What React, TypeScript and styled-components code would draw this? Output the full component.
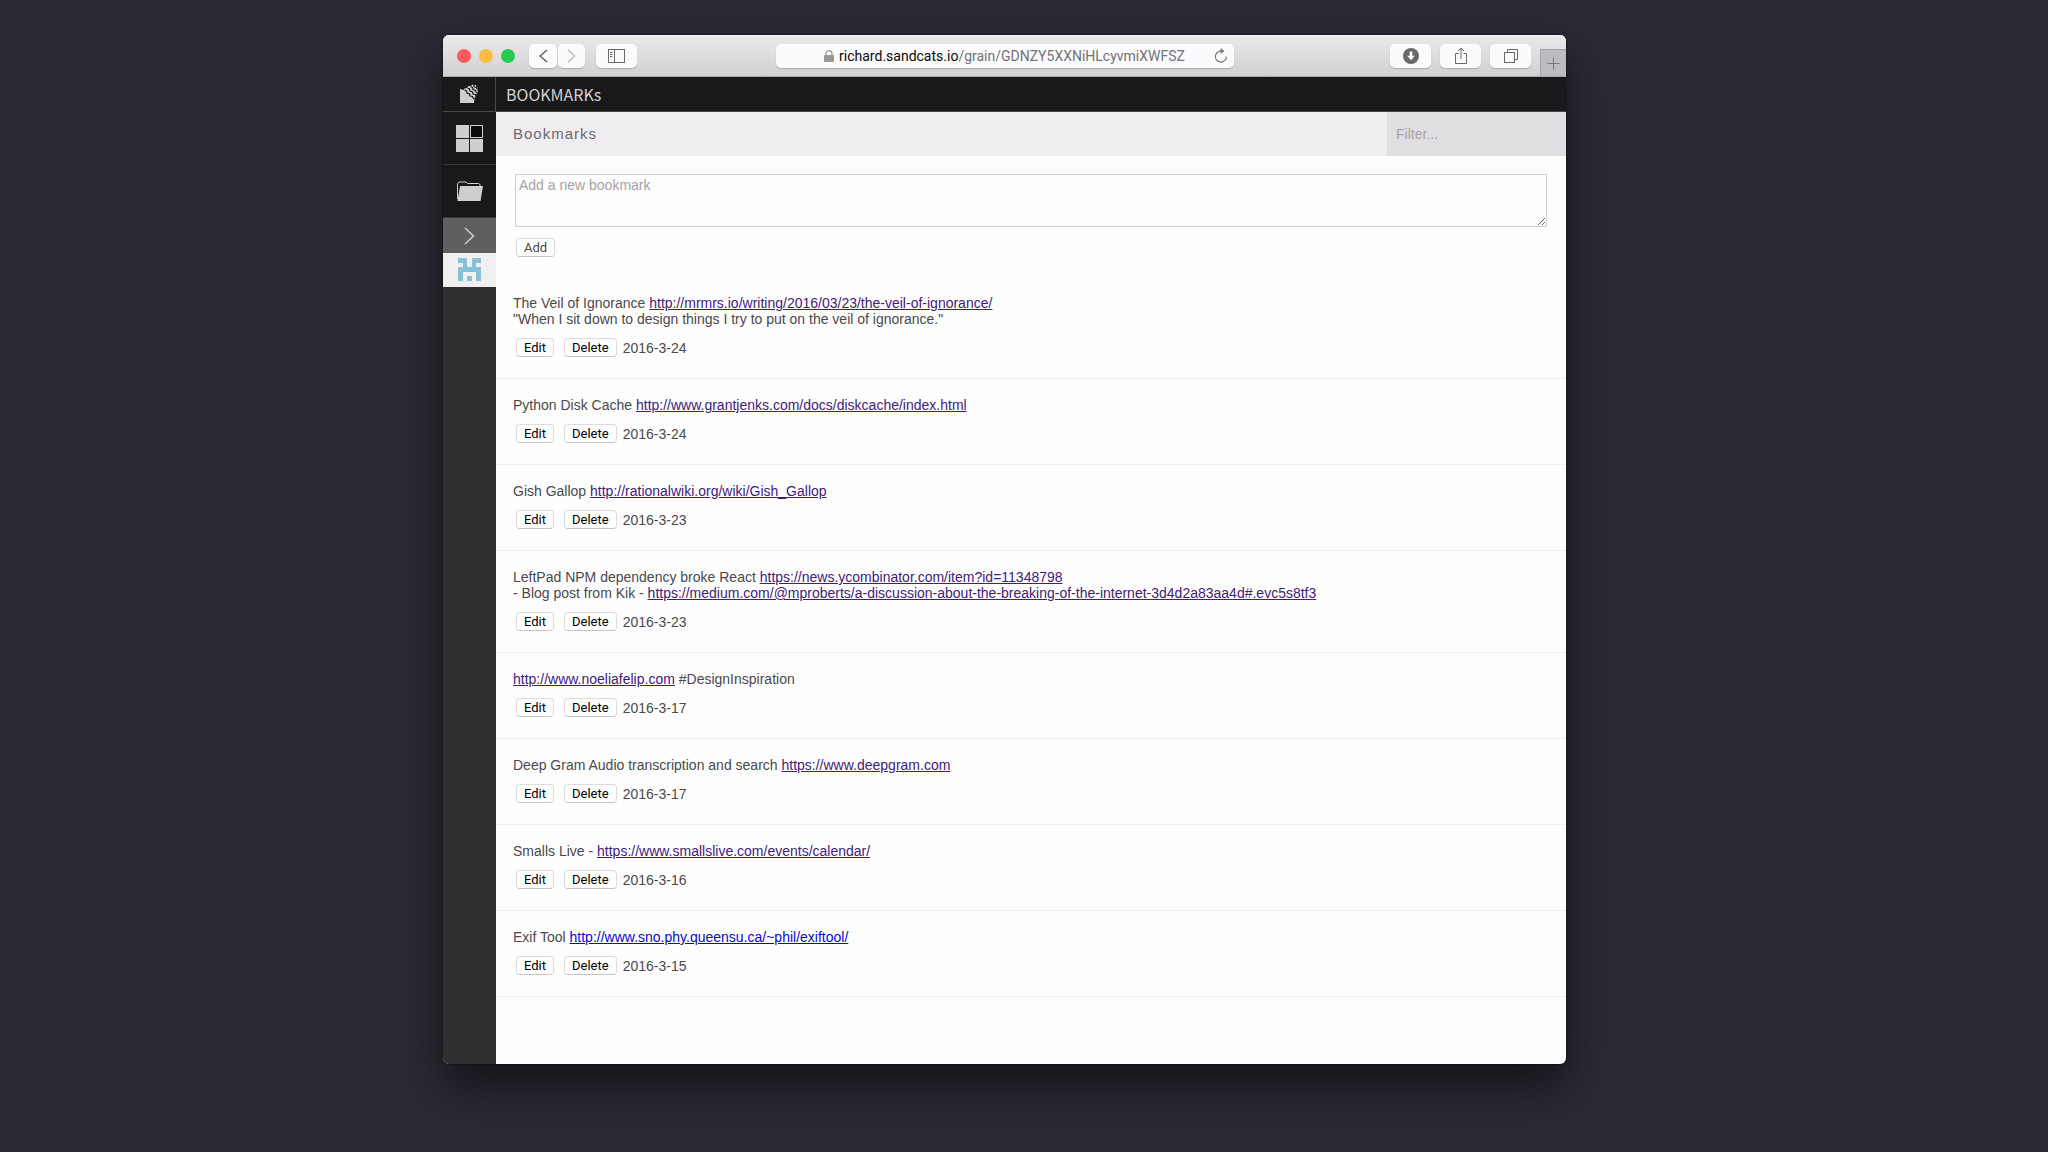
import React from "react";
import styled, { createGlobalStyle, css } from "styled-components";

const sans = `"Liberation Sans", Arial, Helvetica, sans-serif`;
const system = `Roboto, "Liberation Sans", sans-serif`;

const GlobalStyle = createGlobalStyle`
  *, *::before, *::after { box-sizing: border-box; }
  body { margin: 0; background: #2a2a35; font-family: ${sans}; }
`;

const Desktop = styled.div`
  display: flex;
  min-height: 100vh;
  padding: 35px 482px 88px 443px;
  background: #2a2a35;
`;

const BrowserWindow = styled.div`
  flex: 1;
  min-width: 0;
  display: flex;
  flex-direction: column;
  border-radius: 6px;
  overflow: hidden;
  background: #fefefe;
  box-shadow: 0 0 1px 1px rgba(0, 0, 0, 0.3), 0 22px 44px rgba(0, 0, 0, 0.55);
`;

const Toolbar = styled.header`
  display: grid;
  grid-template-columns: 1fr 458px 1fr;
  align-items: center;
  height: 42px;
  border-bottom: 1px solid #a9a7aa;
  background: linear-gradient(#ece9ed, #d3d0d4);
  box-shadow: inset 0 1px 0 #f8f7f9;
`;

const ToolGroup = styled.div<{ $end?: boolean }>`
  display: flex;
  align-items: center;
  align-self: stretch;
  justify-content: ${(p) => (p.$end ? "flex-end" : "flex-start")};
  gap: ${(p) => (p.$end ? "9px" : "0")};
`;

const Lights = styled.div`
  display: flex;
  gap: 8px;
  padding: 0 14px;
`;

const Light = styled.button<{ $color: string }>`
  width: 14px;
  height: 14px;
  padding: 0;
  border: 0;
  border-radius: 50%;
  background: ${(p) => p.$color};
`;

const NavPair = styled.div`
  display: flex;
  gap: 1px;
  margin-right: 11px;
`;

const ToolButton = styled.button<{ $width: number }>`
  display: flex;
  align-items: center;
  justify-content: center;
  width: ${(p) => p.$width}px;
  height: 24px;
  padding: 0;
  border: 0;
  border-radius: 5px;
  background: #fbfafc;
  box-shadow: 0 1px 1px rgba(0, 0, 0, 0.2);
  color: #6a696c;
`;

const NewTab = styled.button`
  align-self: flex-end;
  display: flex;
  align-items: center;
  justify-content: center;
  width: 26px;
  height: 27px;
  padding: 0;
  border: 1px solid #a5a2a7;
  border-width: 1px 0 0 1px;
  background: #bfbcc1;
  color: #7b797d;
`;

const AddressBar = styled.div`
  display: grid;
  grid-template-columns: 1fr auto 1fr;
  align-items: center;
  height: 24px;
  border-radius: 5px;
  background: #fcfbfd;
  box-shadow: 0 1px 1px rgba(0, 0, 0, 0.2);
  font: 14px/24px ${system};
  color: #737276;
`;

const Address = styled.span`
  display: flex;
  align-items: center;
  gap: 5px;
  white-space: nowrap;

  strong {
    font-weight: 400;
    color: #0a0a0a;
  }
`;

const Reload = styled.button`
  justify-self: end;
  display: flex;
  margin-right: 6px;
  padding: 0;
  border: 0;
  background: none;
  color: #78777a;
`;

const Shell = styled.div`
  flex: 1;
  display: grid;
  grid-template-columns: 53px minmax(0, 1fr);
`;

const Sidebar = styled.nav`
  display: flex;
  flex-direction: column;
  background: #2f3031;
`;

type CellKind = "logo" | "app" | "expand" | "grain";

const cellStyles = {
  logo: css`height: 35px; background: #19181a; border-right: 1px solid #48474a; border-bottom: 1px solid #48474a;`,
  app: css`height: 53px; background: #19181a; border-bottom: 1px solid #39383a;`,
  expand: css`height: 35px; background: #5f5e60;`,
  grain: css`height: 34px; padding-bottom: 2px; background: #f1f0f1;`,
};

const SideCell = styled.a<{ $kind: CellKind }>`
  display: flex;
  align-items: center;
  justify-content: center;
  color: #d0ced1;
  ${(p) => cellStyles[p.$kind]}
`;

const Main = styled.div`
  display: flex;
  flex-direction: column;
`;

const GrainBar = styled.h1`
  margin: 0;
  height: 35px;
  padding-left: 10px;
  background: #19181a;
  border-bottom: 1px solid #48474a;
  color: #d3d2d4;
  font: 400 16px/34px "Noto Sans CJK SC", "Noto Sans", sans-serif;
`;

const PageBar = styled.div`
  display: flex;
  height: 44px;
  background: #efedf0;
`;

const PageTitle = styled.h2`
  flex: 1;
  margin: 0;
  padding-left: 17px;
  font: 400 15px/44px ${sans};
  letter-spacing: 1px;
  color: #6b6a6d;
`;

const Filter = styled.input`
  width: 179px;
  padding: 0 9px;
  border: 0;
  border-radius: 0;
  background: #e1dfe2;
  font: 14px ${sans};
  color: #4a494c;

  &::placeholder { color: #a5a3a6; opacity: 1; }
`;

const AddForm = styled.form`
  display: flex;
  flex-direction: column;
  align-items: flex-start;
  gap: 11px;
  padding: 18px 19px 20px;
`;

const NewBookmark = styled.textarea`
  display: block;
  width: 100%;
  height: 53px;
  padding: 1px 3px;
  border: 1px solid #cfcdd0;
  background: #fefefe;
  font: 14px/18px ${sans};
  color: #4a494c;

  &::placeholder { color: #a5a3a6; opacity: 1; }
`;

const PushButton = styled.button<{ $muted?: boolean }>`
  height: 19px;
  padding: 0 7px;
  border: 1px solid #dddbde;
  border-bottom-color: #c6c4c8;
  border-radius: 4px;
  background: #fff;
  font: 400 13px/16px ${system};
  color: ${(p) => (p.$muted ? "#4a494c" : "#000")};
`;

const FormActions = styled.div`
  display: flex;
  padding-left: 1px;
`;

const List = styled.ul`
  margin: 0;
  padding: 0;
  list-style: none;
`;

const Item = styled.li`
  padding: 18px 17px 21px;
  border-bottom: 1px solid #efedf0;
  font-size: 14px;
  line-height: 16px;
  color: #4a494c;
`;

const Note = styled.p`
  margin: 0;
`;

const Link = styled.a<{ $fresh?: boolean }>`
  color: ${(p) => (p.$fresh ? "#0a0ac0" : "#42207a")};
  text-decoration: underline;
`;

const Actions = styled.div`
  display: flex;
  align-items: center;
  margin-top: 11px;
  padding-left: 3px;
`;

const ButtonPair = styled.div`
  display: flex;
  gap: 10px;
  margin-right: 6px;
`;

type Part = string | { href: string; fresh?: boolean };

const bookmarks: { lines: Part[][]; date: string }[] = [
  {
    lines: [
      ["The Veil of Ignorance ", { href: "http://mrmrs.io/writing/2016/03/23/the-veil-of-ignorance/" }],
      ['"When I sit down to design things I try to put on the veil of ignorance."'],
    ],
    date: "2016-3-24",
  },
  {
    lines: [["Python Disk Cache ", { href: "http://www.grantjenks.com/docs/diskcache/index.html" }]],
    date: "2016-3-24",
  },
  { lines: [["Gish Gallop ", { href: "http://rationalwiki.org/wiki/Gish_Gallop" }]], date: "2016-3-23" },
  {
    lines: [
      ["LeftPad NPM dependency broke React ", { href: "https://news.ycombinator.com/item?id=11348798" }],
      [
        "- Blog post from Kik - ",
        { href: "https://medium.com/@mproberts/a-discussion-about-the-breaking-of-the-internet-3d4d2a83aa4d#.evc5s8tf3" },
      ],
    ],
    date: "2016-3-23",
  },
  { lines: [[{ href: "http://www.noeliafelip.com" }, " #DesignInspiration"]], date: "2016-3-17" },
  {
    lines: [["Deep Gram Audio transcription and search ", { href: "https://www.deepgram.com" }]],
    date: "2016-3-17",
  },
  { lines: [["Smalls Live - ", { href: "https://www.smallslive.com/events/calendar/" }]], date: "2016-3-16" },
  {
    lines: [["Exif Tool ", { href: "http://www.sno.phy.queensu.ca/~phil/exiftool/", fresh: true }]],
    date: "2016-3-15",
  },
];

const Chevron = ({ flip, color }: { flip?: boolean; color: string }) => (
  <svg width="9" height="14" viewBox="0 0 9 14" fill="none" stroke={color} strokeWidth="1.4">
    <path d={flip ? "M1 1l7 6-7 6" : "M8 1L1 7l7 6"} />
  </svg>
);

const PanelIcon = () => (
  <svg width="17" height="14" viewBox="0 0 17 14" fill="none" stroke="currentColor">
    <rect x=".5" y=".5" width="16" height="13" />
    <path d="M6.5 0v14M2 3.5h2.5M2 5.5h2.5M2 7.5h2.5" />
  </svg>
);

const LockIcon = () => (
  <svg width="10" height="12" viewBox="0 0 10 12">
    <rect x="0" y="5" width="10" height="7" rx="1" fill="#98979a" />
    <path d="M2 5.5V3.6a3 3 0 0 1 6 0v1.9" fill="none" stroke="#98979a" strokeWidth="1.2" />
  </svg>
);

const ReloadIcon = () => (
  <svg width="14" height="16" viewBox="0 0 14 16" fill="none" stroke="currentColor" strokeWidth="1.2">
    <path d="M12.4 8.5a5.500 5.500 0 1 1-5.500-5.400h1.600" />
    <path d="M6.500 0l4 3.100-4 3z" fill="currentColor" stroke="none" />
  </svg>
);

const DownloadIcon = () => (
  <svg width="16" height="16" viewBox="0 0 16 16">
    <circle cx="8" cy="8" r="8" fill="#69686b" />
    <path d="M6.700 3.500h2.600v4.300h2.500L8 12.300 4.200 7.800h2.500z" fill="#fff" />
  </svg>
);

const ShareIcon = () => (
  <svg width="14" height="18" viewBox="0 0 14 18" fill="none" stroke="currentColor">
    <path d="M4.500 6.500h-3v10h11v-10h-3M7 12V1.500M4 4l3-3 3 3" />
  </svg>
);

const TabsIcon = () => (
  <svg width="14" height="14" viewBox="0 0 14 14" fill="none" stroke="currentColor">
    <rect x=".5" y="3.500" width="10" height="10" />
    <path d="M3.500 3.500v-3h10v10h-3" />
  </svg>
);

const PlusIcon = () => (
  <svg width="13" height="13" viewBox="0 0 13 13" stroke="currentColor">
    <path d="M6.500 0.500v12M0.500 6.500h12" />
  </svg>
);

const LogoIcon = () => (
  <svg width="20" height="20" viewBox="0 0 20 20">
    <path
      d="M1 5l3.500 1 1-1.500L8 4l1.500-2L12 2l1.500-1.500L15 1.500l2-.5.500 2 1.500 1-.500 2 .500 2-1.500 1.500-.500 2.500-1.500 1.500L15 19H1z"
      fill="currentColor"
    />
    <path
      d="M5.500 6l2 1 .5 2 2.500 1 .5 2 2.500.5 1 2.500M8.500 4l2 1 .5 2 2.500 1 .5 2 2.500.5.500 1.500M11.500 2.500l2 1 .5 2 2.500 1 .5 1.500 1.500.500M14.500 1.500l1 1.500 2 .500 1 2"
      fill="none"
      stroke="#19181a"
      strokeWidth="1.200"
    />
  </svg>
);

const AppsIcon = () => (
  <svg width="27" height="27" viewBox="0 0 27 27" fill="currentColor">
    <rect width="13" height="13" />
    <rect x="14.500" y=".5" width="12" height="12" fill="#0b0a0c" stroke="currentColor" />
    <rect y="14" width="13" height="13" />
    <rect x="14" y="14" width="13" height="13" />
  </svg>
);

const FolderIcon = () => (
  <svg width="27" height="20" viewBox="0 0 27 20">
    <path d="M1.500 18V2.500L3 1h7l1.500 1.500H22.500l1.500 1V5" fill="none" stroke="currentColor" />
    <path d="M4 5h23l-2.500 15H1.500z" fill="currentColor" />
  </svg>
);

const ExpandIcon = () => (
  <svg width="11" height="18" viewBox="0 0 11 18" fill="none" stroke="currentColor" strokeWidth="1.5">
    <path d="M1 1l8.500 8L1 17" />
  </svg>
);

const identicon = ["11011", "01010", "11111", "10001", "10101"];

const Identicon = () => (
  <svg width="23" height="23" viewBox="0 0 5 5" fill="#85c2d8" shapeRendering="crispEdges">
    {identicon.flatMap((row, y) =>
      [...row].map((on, x) => (on === "1" ? <rect key={`${x}-${y}`} x={x} y={y} width="1" height="1" /> : null)),
    )}
  </svg>
);

export default function App() {
  return (
    <>
      <GlobalStyle />
      <Desktop>
        <BrowserWindow>
          <Toolbar>
            <ToolGroup>
              <Lights>
                <Light $color="#fc5b5d" aria-label="Close" />
                <Light $color="#fdbc40" aria-label="Minimize" />
                <Light $color="#26c951" aria-label="Zoom" />
              </Lights>
              <NavPair>
                <ToolButton $width={28} aria-label="Back"><Chevron color="#5b5a5d" /></ToolButton>
                <ToolButton $width={27} aria-label="Forward"><Chevron flip color="#b9b8bb" /></ToolButton>
              </NavPair>
              <ToolButton $width={41} aria-label="Sidebar"><PanelIcon /></ToolButton>
            </ToolGroup>
            <AddressBar>
              <span />
              <Address>
                <LockIcon />
                <span><strong>richard.sandcats.io</strong>/grain/GDNZY5XXNiHLcyvmiXWFSZ</span>
              </Address>
              <Reload aria-label="Reload"><ReloadIcon /></Reload>
            </AddressBar>
            <ToolGroup $end>
              <ToolButton $width={41} aria-label="Downloads"><DownloadIcon /></ToolButton>
              <ToolButton $width={41} aria-label="Share"><ShareIcon /></ToolButton>
              <ToolButton $width={41} aria-label="Tabs"><TabsIcon /></ToolButton>
              <NewTab aria-label="New tab"><PlusIcon /></NewTab>
            </ToolGroup>
          </Toolbar>
          <Shell>
            <Sidebar>
              <SideCell $kind="logo" href="#home" aria-label="Home"><LogoIcon /></SideCell>
              <SideCell $kind="app" href="#apps" aria-label="Apps"><AppsIcon /></SideCell>
              <SideCell $kind="app" href="#files" aria-label="Files"><FolderIcon /></SideCell>
              <SideCell $kind="expand" href="#expand" aria-label="Expand"><ExpandIcon /></SideCell>
              <SideCell $kind="grain" href="#grain" aria-label="Bookmarks grain"><Identicon /></SideCell>
            </Sidebar>
            <Main>
              <GrainBar>BOOKMARKs</GrainBar>
              <PageBar>
                <PageTitle>Bookmarks</PageTitle>
                <Filter placeholder="Filter..." aria-label="Filter" />
              </PageBar>
              <AddForm onSubmit={(e) => e.preventDefault()}>
                <NewBookmark placeholder="Add a new bookmark" aria-label="Add a new bookmark" />
                <FormActions>
                  <PushButton $muted>Add</PushButton>
                </FormActions>
              </AddForm>
              <List>
                {bookmarks.map((b, i) => (
                  <Item key={i}>
                    {b.lines.map((line, j) => (
                      <Note key={j}>
                        {line.map((part, k) =>
                          typeof part === "string" ? part : (
                            <Link key={k} href={part.href} $fresh={part.fresh}>{part.href}</Link>
                          ),
                        )}
                      </Note>
                    ))}
                    <Actions>
                      <ButtonPair>
                        <PushButton>Edit</PushButton>
                        <PushButton>Delete</PushButton>
                      </ButtonPair>
                      <time>{b.date}</time>
                    </Actions>
                  </Item>
                ))}
              </List>
            </Main>
          </Shell>
        </BrowserWindow>
      </Desktop>
    </>
  );
}
